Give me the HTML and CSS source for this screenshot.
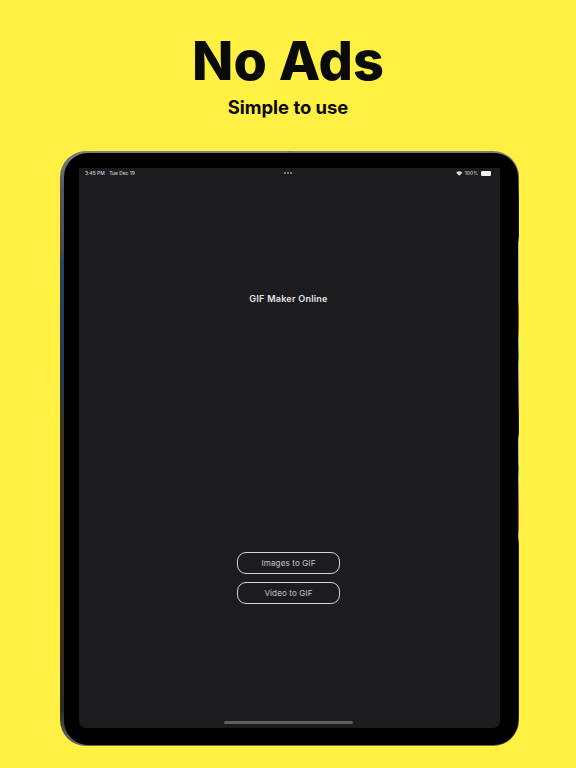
FILE: index.html
```html
<!DOCTYPE html>
<html lang="en">
<head>
<meta charset="utf-8">
<title>No Ads</title>
<link rel="stylesheet" href="styles.css">
</head>
<body>
<main class="page">
  <header class="hero">
    <h1 class="hero-title">No Ads</h1>
    <p class="hero-sub">Simple to use</p>
  </header>
  <div class="device">
    <div class="bezel">
      <div class="screen">
        <div class="status">
          <div class="status-left"><span>3:45 PM</span><span>Tue Dec 19</span></div>
          <div class="dots"><i></i><i></i><i></i></div>
          <div class="status-right">
            <svg class="wifi" viewBox="0 0 16 12" aria-hidden="true"><path d="M8 11.5 0.4 3.9C4.6-.3 11.4-.3 15.6 3.9Z" fill="#d8d8da"/></svg>
            <span>100%</span>
            <span class="battery"></span>
          </div>
        </div>
        <h2 class="app-title">GIF Maker Online</h2>
        <div class="actions">
          <button class="action">Images to GIF</button>
          <button class="action">Video to GIF</button>
        </div>
        <div class="home"></div>
      </div>
    </div>
  </div>
</main>
</body>
</html>
```
FILE: styles.css
```css
* { box-sizing: border-box; }
html, body { margin: 0; padding: 0; }
body {
  width: 576px;
  height: 768px;
  overflow: hidden;
  background: #fff042;
  font-family: Inter, "Liberation Sans", sans-serif;
}
.page {
  height: 768px;
  display: flex;
  flex-direction: column;
  align-items: center;
}
.hero {
  height: 151px;
  padding-top: 31px;
  text-align: center;
  color: #0a0a08;
}
.hero-title {
  margin: 0;
  font-size: 54px;
  line-height: 60px;
  font-weight: 800;
  letter-spacing: 0;
}
.hero-sub {
  margin: 1px 0 0;
  font-size: 18.4px;
  line-height: 30px;
  font-weight: 700;
}
.device {
  align-self: flex-start;
  margin-left: 60px;
  width: 459px;
  height: 595px;
  padding: 1.5px 1.5px 1.5px 4px;
  border-radius: 26px;
  background-color: #55565a;
  background-repeat: no-repeat;
  background-position: left top, right top;
  background-size: 50% 100%, 50% 100%;
  background-image:
    linear-gradient(180deg, #7d7e82 0, #55565a 40px, #4a4c50 95px, #2b4464 110px, #24384f 230px, #3a3722 270px, #3a3420 430px, #2e2c22 560px, #6a6b6e 595px),
    linear-gradient(180deg, #7d7e82 0, #55565a 30px, #1a1a1a 50px, #1a1a1a 85px, #b9b9bc 92px, #a9a9ac 150px, #8a5a30 156px, #8a5a30 178px, #a9a9ac 190px, #2f8a70 206px, #a9a9ac 214px, #4a5a80 252px, #1a1a1a 268px, #1a1a1a 282px, #b9b9bc 288px, #a9a9ac 312px, #3f8a50 317px, #a9a9ac 326px, #a05070 356px, #a05070 376px, #b9b9bc 386px, #262626 392px, #262626 560px, #6a6b6e 595px);
}
.bezel {
  height: 100%;
  padding: 15.5px 18px 16.5px 14.5px;
  border-radius: 24px;
  background: #000;
}
.screen {
  height: 100%;
  padding-right: 1px;
  display: flex;
  flex-direction: column;
  align-items: center;
  border-radius: 1px 1px 7px 7px;
  background: #1c1c20;
  color: #dcdcde;
}
.status {
  width: 100%;
  height: 10px;
  padding: 0 7.5px 0 6.5px;
  display: grid;
  grid-template-columns: 1fr auto 1fr;
  align-items: center;
  font-size: 4.9px;
  line-height: 10px;
  font-weight: 500;
  color: #cfcfd2;
}
.status-left { display: flex; gap: 4.5px; }
.status-right { display: flex; align-items: center; justify-content: flex-end; gap: 2px; }
.dots { display: flex; gap: 1.2px; }
.dots i { width: 2.2px; height: 2.2px; border-radius: 50%; background: #8e8e92; }
.wifi { width: 6.5px; height: 5px; }
.battery {
  width: 10px;
  height: 5px;
  margin-left: 1px;
  border-radius: 1.2px;
  background: #f2f2f4;
}
.app-title {
  margin: 115px 0 0;
  font-size: 9.1px;
  line-height: 12px;
  font-weight: 600;
  letter-spacing: 0.2px;
  color: #e2e2e4;
}
.actions {
  margin-top: 247px;
  display: flex;
  flex-direction: column;
  gap: 8px;
}
.action {
  width: 103px;
  height: 22px;
  padding: 0;
  border: 1.6px solid #d4d4d6;
  border-radius: 9px;
  background: transparent;
  color: #c6c6c9;
  font: 400 8.1px/1 Inter, "Liberation Sans", sans-serif;
  letter-spacing: 0.1px;
}
.home {
  margin-top: auto;
  margin-bottom: 4px;
  width: 129px;
  height: 3px;
  border-radius: 2px;
  background: #5f5f62;
}
```
